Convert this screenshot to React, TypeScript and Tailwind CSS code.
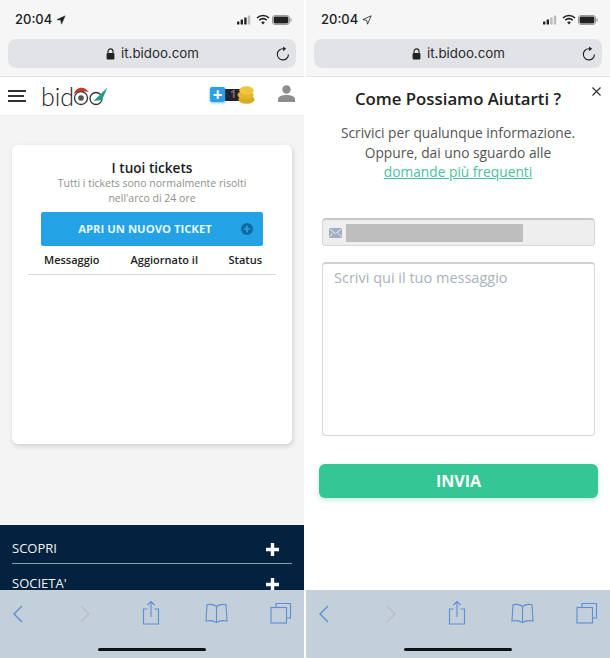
const OPEN = "font-['Open_Sans',sans-serif]";
const UI = "font-['Inter',sans-serif]";

function Signal({ dim }: { dim?: boolean }) {
  return (
    <svg width="14" height="10" viewBox="0 0 14 10">
      <rect x="0" y="6.5" width="2.4" height="3" rx="0.5" fill="#222" />
      <rect x="3.6" y="4.5" width="2.4" height="5" rx="0.5" fill="#222" />
      <rect x="7.2" y="2.5" width="2.4" height="7" rx="0.5" fill={dim ? '#bbb' : '#222'} />
      <rect x="10.8" y="0.5" width="2.4" height="9" rx="0.5" fill="#bbb" />
    </svg>
  );
}

function Wifi() {
  return (
    <svg width="14" height="11" viewBox="0 0 14 11" fill="none" stroke="#222">
      <path d="M1 4a8.6 8.6 0 0 1 12 0" strokeWidth="1.6" />
      <path d="M3.2 6.2a5.4 5.4 0 0 1 7.6 0" strokeWidth="1.6" />
      <path d="M7 10.6 5.2 8.4a2.6 2.6 0 0 1 3.6 0Z" fill="#222" stroke="none" />
    </svg>
  );
}

function Battery() {
  return (
    <svg width="20" height="10" viewBox="0 0 20 10">
      <rect x="0.5" y="0.5" width="17" height="9" rx="2.4" fill="none" stroke="#999" />
      <rect x="1.6" y="1.6" width="14.8" height="6.8" rx="1.4" fill="#222" />
      <rect x="18.4" y="3.2" width="1.2" height="3.6" rx="0.6" fill="#999" />
    </svg>
  );
}

function Lock() {
  return (
    <svg width="9" height="12" viewBox="0 0 9 12">
      <path d="M2 5.5V3.4a2.5 2.5 0 0 1 5 0v2.1" fill="none" stroke="#222" strokeWidth="1.1" />
      <rect x="0.6" y="5" width="7.8" height="6.6" rx="1" fill="#222" />
    </svg>
  );
}

function Reload() {
  return (
    <svg width="14" height="15" viewBox="0 0 13 14" fill="none" stroke="#222" strokeWidth="1.1">
      <path d="M11.6 8a5.2 5.2 0 1 1-5-5.4h1.6" />
      <path d="M6.6 0.4 9.4 2.6 6.6 4.8Z" fill="#222" stroke="none" />
    </svg>
  );
}

function Arrow({ outline }: { outline?: boolean }) {
  return (
    <svg width="10" height="10" viewBox="0 0 10 10">
      <path
        d="M9.2 0.8 0.8 4.6l3.9.7.8 3.9Z"
        fill={outline ? 'none' : '#222'}
        stroke="#222"
        strokeWidth={outline ? 0.8 : 0.4}
        strokeLinejoin="round"
      />
    </svg>
  );
}

function TopBar({ dim }: { dim?: boolean }) {
  return (
    <div className={`${UI} h-[77px] shrink-0 bg-[#f6f6f7] border-b border-[#e4e4e6] px-2`}>
      <div className="flex h-[39px] items-center justify-between pl-[7px] pr-[4px]">
        <div className="flex items-center gap-[4px] text-[13px] font-medium text-[#1c1c1e]">
          20:04
          <Arrow outline={dim} />
        </div>
        <div className="flex items-center">
          <Signal dim={dim} />
          <div className="ml-[5px] mr-[2px]">
            <Wifi />
          </div>
          <Battery />
        </div>
      </div>
      <div className="flex h-[29px] items-center rounded-[8px] bg-[#e2e3e6] pl-[98px] pr-[6px] text-[13.3px] text-[#2a2a2c]">
        <Lock />
        <span className="ml-[6px] flex-1">it.bidoo.com</span>
        <Reload />
      </div>
    </div>
  );
}

function BottomBar() {
  const blue = '#5b8fd6';
  return (
    <div className="relative flex h-[68px] shrink-0 items-start bg-[#c3cfd9] pl-[12px] pt-[13px]">
      <svg width="12" height="20" viewBox="0 0 12 20" fill="none" stroke={blue} strokeWidth="1.4" className="mt-[1px]">
        <path d="M10 2 2 10l8 8" />
      </svg>
      <svg width="12" height="20" viewBox="0 0 12 20" fill="none" stroke="#b5bfca" strokeWidth="1.4" className="ml-[55px] mt-[1px]">
        <path d="M2 2l8 8-8 8" />
      </svg>
      <svg width="18" height="25" viewBox="0 0 18 25" fill="none" stroke={blue} strokeWidth="1.1" className="ml-[51px] -mt-[3px]">
        <path d="M5.5 9H1.5v15h15V9h-4M9 17V1.5M5.5 5 9 1.5 12.5 5" />
      </svg>
      <svg width="23" height="21" viewBox="0 0 23 21" fill="none" stroke={blue} strokeWidth="1.1" className="ml-[45px]">
        <path d="M11.5 3.5C9.5 1.5 5 1 2 1.8L1 18c3.5-.7 7.5-.3 10.5 1.5 3-1.8 7-2.2 10.5-1.5L21 1.8C18 1 13.5 1.5 11.5 3.5ZM11.5 3.5v16" />
      </svg>
      <svg width="22" height="22" viewBox="0 0 22 22" fill="none" stroke={blue} strokeWidth="1.1" className="ml-[42px] -mt-[1px]">
        <path d="M6 5V1.5h14.5V16H16.5" />
        <rect x="1" y="5.5" width="15.5" height="15.5" />
      </svg>
      <div className="absolute bottom-[7px] left-[98px] h-[3px] w-[108px] rounded-full bg-[#111]" />
    </div>
  );
}

function Logo() {
  return (
    <div className="flex items-center">
      <span className="font-['Lato',sans-serif] text-[25px] font-light leading-none text-[#222]">bid</span>
      <svg width="38" height="22" viewBox="0 0 38 22" className="-ml-[2px]">
        <circle cx="9" cy="13" r="6.5" fill="none" stroke="#333" strokeWidth="1.3" />
        <path d="M2 9C3 2 13 0 16.5 7 12 5.5 6 6 2 9Z" fill="#c0392b" />
        <circle cx="9" cy="13" r="2.8" fill="#555" />
        <circle cx="24" cy="13.5" r="6" fill="none" stroke="#333" strokeWidth="1.3" />
        <path d="M21.5 16 35.5 2.5 30 15Z" fill="#1f9d8a" />
      </svg>
    </div>
  );
}

function Coins() {
  return (
    <svg width="18" height="18" viewBox="0 0 20 20" className="-ml-[5px]">
      <ellipse cx="10.5" cy="15" rx="9" ry="4.6" fill="#d9a91f" />
      <ellipse cx="9.5" cy="10" rx="9" ry="4.6" fill="#e4b62c" />
      <ellipse cx="10.5" cy="5" rx="8" ry="4.6" fill="#f0c63c" />
    </svg>
  );
}

function PlusIcon() {
  return (
    <svg width="13" height="13" viewBox="0 0 13 13" stroke="#fff" strokeWidth="3.4" className="shrink-0">
      <path d="M6.5 0v13M0 6.5h13" />
    </svg>
  );
}

function LeftPhone() {
  return (
    <div className="flex h-[658px] w-[304px] flex-col">
      <TopBar />
      <div className="flex h-[39px] shrink-0 items-center border-b border-[#eee] bg-white pl-2 pr-[9px]">
        <div className="flex w-[18px] flex-col gap-[3.5px]">
          <div className="h-[1.5px] bg-[#333]" />
          <div className="h-[1.5px] w-[16px] bg-[#333]" />
          <div className="h-[1.5px] bg-[#333]" />
        </div>
        <div className="ml-[15px]">
          <Logo />
        </div>
        <div className="ml-auto -mt-[3px] flex items-center">
          <div className={`${OPEN} z-10 flex h-[15px] w-[15px] items-center justify-center rounded-[2px] bg-[#2b9fe8] text-[17px] font-bold leading-none text-white shadow-[0_1px_3px_rgba(43,159,232,0.6)]`}>
            +
          </div>
          <div className={`${OPEN} flex h-[12px] w-[17px] items-center bg-[#22222c] pl-[5px] text-[11px] font-bold text-[#7c6a72]`}>
            1
          </div>
          <Coins />
        </div>
        <svg width="17" height="17" viewBox="0 0 17 17" fill="#8d8d8d" className="ml-[23px] -mt-[6px]">
          <circle cx="8.5" cy="4.5" r="4.2" />
          <path d="M0 17v-2.5C0 11 4.5 10 8.5 10s8.5 1 8.5 4.5V17Z" />
        </svg>
      </div>
      <div className="flex-1 bg-[#f4f4f4] px-3 pt-[29px]">
        <div className={`${OPEN} h-[299px] rounded-[6px] bg-white px-4 pt-[15px] text-center shadow-[1px_2px_5px_rgba(0,0,0,0.16)]`}>
          <div className="text-[13.6px] font-semibold leading-[16px] text-[#1c1c1c]">I tuoi tickets</div>
          <div className="text-[10.5px] leading-[14.5px] text-[#8f8f8f]">
            Tutti i tickets sono normalmente risolti
            <br />
            nell'arco di 24 ore
          </div>
          <div className="relative mx-[13px] mt-[7px] flex h-[34px] items-center justify-center rounded-[2px] bg-[#23a3e6] pr-[14px] text-[11.3px] font-bold text-[#e4f5ff]">
            APRI UN NUOVO TICKET
            <svg width="12" height="12" viewBox="0 0 12 12" className="absolute right-[10px] top-[11px]">
              <circle cx="6" cy="6" r="6" fill="#12699f" />
              <path d="M6 2.8v6.4M2.8 6h6.4" stroke="#23a3e6" strokeWidth="1.6" />
            </svg>
          </div>
          <div className="flex h-[29px] items-center border-b border-[#d8d8d8] pl-[16px] pr-[14px] text-[11px] font-semibold text-[#222]">
            <span>Messaggio</span>
            <span className="ml-[31px]">Aggiornato il</span>
            <span className="ml-auto">Status</span>
          </div>
        </div>
      </div>
      <div className={`${OPEN} h-[65px] shrink-0 overflow-hidden bg-[#04223f] px-3 text-[13px] text-[#eef2f6]`}>
        <div className="flex h-[39px] items-center justify-between border-b border-[#8c9db3] pt-[10px]">
          <span>SCOPRI</span>
          <div className="mr-[13px]">
            <PlusIcon />
          </div>
        </div>
        <div className="flex items-start justify-between pt-[13px] leading-[12px]">
          <span>SOCIETA'</span>
          <div className="mr-[13px] mt-[1px]">
            <PlusIcon />
          </div>
        </div>
      </div>
      <BottomBar />
    </div>
  );
}

function RightPhone() {
  return (
    <div className="flex h-[658px] w-[304px] flex-col">
      <TopBar dim />
      <div className={`${OPEN} relative flex-1 bg-white pt-[11px] text-center`}>
        <svg width="9" height="9" viewBox="0 0 9 9" stroke="#333" strokeWidth="1.2" className="absolute right-[9px] top-[10px]">
          <path d="M0.5 0.5l8 8M8.5 0.5l-8 8" />
        </svg>
        <div className="text-[16.8px] font-semibold leading-[22px] text-[#222]">Come Possiamo Aiutarti ?</div>
        <div className="mt-[13px] text-[13.75px] leading-[19.5px] text-[#555]">
          Scrivici per qualunque informazione.
          <br />
          Oppure, dai uno sguardo alle
          <br />
          <span className="text-[#4cbf9f] underline">domande più frequenti</span>
        </div>
        <div className="ml-[16px] mr-[15px] mt-[36.5px] flex h-[28px] items-center rounded-[4px] border border-[#d6d6d6] border-t-2 border-t-[#c8c8c8] bg-[#eeeeee] pl-[6px]">
          <svg width="13" height="10" viewBox="0 0 13 10">
            <rect width="13" height="10" rx="1" fill="#9fb0c2" />
            <path d="M0.5 1 6.5 5.5 12.5 1M0.5 9 4.5 4.5M12.5 9 8.5 4.5" fill="none" stroke="#eee" strokeWidth="0.9" />
          </svg>
          <div className="ml-[4px] h-[18px] w-[177px] bg-[#bebebe]" />
        </div>
        <div className="ml-[16px] mr-[15px] mt-[16px] h-[174px] rounded-[4px] border border-[#d6d6d6] border-t-2 border-t-[#d0d0d0] px-[11px] pt-[4px] text-left text-[14.5px] leading-[20px] text-[#a9b2bc]">
          Scrivi qui il tuo messaggio
        </div>
        <div className="ml-[13px] mr-[12px] mt-[28px] flex h-[34px] items-center justify-center rounded-[6px] bg-[#34c795] text-[16px] font-bold text-white shadow-[0_2px_5px_rgba(52,199,149,0.3)]">
          INVIA
        </div>
      </div>
      <BottomBar />
    </div>
  );
}

export default function App() {
  return (
    <div className="flex h-[658px] w-[610px] overflow-hidden bg-white">
      <LeftPhone />
      <div className="w-[2px] shrink-0 bg-white" />
      <RightPhone />
    </div>
  );
}
